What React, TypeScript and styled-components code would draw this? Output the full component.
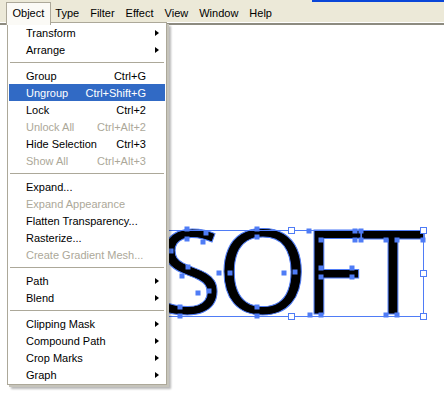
import React from 'react'
import styled, { createGlobalStyle } from 'styled-components'

const Global = createGlobalStyle`
    html, body {
        margin: 0;
        padding: 0;
        background: #fff;
        overflow: hidden;
    }
`

const Root = styled.div`
    position: relative;
    width: 444px;
    height: 401px;
    overflow: hidden;
    background: #fff;
    font-family: "Liberation Sans", Arial, sans-serif;
    font-size: 11px;
    color: #000;
`

const TitleEdge = styled.div`
    height: 2px;
    background: linear-gradient(to right, #ece9d8 0, #ece9d8 312px, #0a46d8 312px, #0a46d8 100%);
`

const MenuBar = styled.div`
    display: flex;
    height: 20px;
    padding-left: 7px;
    background: #ece9d8;
    border-bottom: 1px solid #fff;
    box-shadow: 0 2px 0 #8d8b80;
    margin-bottom: 2px;
`

const BarItem = styled.div<{ $open?: boolean }>`
    display: flex;
    align-items: center;
    padding: 0 5.5px;
    box-sizing: border-box;
    background: ${p => (p.$open ? '#fbfaf6' : 'transparent')};
    border: 1px solid ${p => (p.$open ? '#aca899' : 'transparent')};
    border-bottom: none;
    margin: 0 -1px;
    position: relative;
    z-index: ${p => (p.$open ? 3 : 0)};
    height: ${p => (p.$open ? '23px' : '20px')};
    padding-bottom: ${p => (p.$open ? '3px' : '0')};
`

const Menu = styled.div`
    position: absolute;
    left: 7px;
    top: 22px;
    width: 156px;
    padding: 1px;
    background: #fff;
    border: 1px solid #aca899;
    box-shadow: 2px 2px 0 #c6c4bb, 4px 4px 2px rgba(0, 0, 0, 0.28);
    z-index: 2;
`

const Row = styled.div<{ $active?: boolean; $disabled?: boolean }>`
    display: grid;
    grid-template-columns: 1fr auto 19px;
    align-items: center;
    height: 17px;
    line-height: 16px;
    padding-left: 17px;
    white-space: nowrap;
    background: ${p => (p.$active ? '#316ac5' : 'transparent')};
    color: ${p => (p.$active ? '#fff' : p.$disabled ? '#aca899' : '#000')};
`

const Shortcut = styled.span`
    margin-left: 10px;
    text-align: right;
`

const ArrowCell = styled.span`
    display: flex;
    align-items: center;
    padding-left: 9px;
`

const Arrow = styled.span`
    width: 0;
    height: 0;
    border-top: 3.5px solid transparent;
    border-bottom: 3.5px solid transparent;
    border-left: 4px solid #000;
`

const Separator = styled.div`
    height: 1px;
    margin: 4px 1px 4px 1px;
    background: #aca899;
`

const Artwork = styled.div`
    position: absolute;
    left: 150px;
    top: 205px;
    width: 290px;
    height: 120px;
    z-index: 1;
`

const Letters = styled.div`
    position: absolute;
    left: 8px;
    top: 5px;
    font-family: "Open Sans", sans-serif;
    font-size: 118px;
    line-height: 1;
    letter-spacing: -6px;
    white-space: nowrap;
    color: #000;
    -webkit-text-stroke: 1px #4f7cf6;
`

const Glyph = styled.span<{ $shift?: number }>`
    margin-left: ${p => p.$shift ?? 0}px;
`

const Overlay = styled.svg`
    position: absolute;
    left: 0;
    top: 0;
`

const menuBar = ['Object', 'Type', 'Filter', 'Effect', 'View', 'Window', 'Help']

type Item =
    | { sep: true }
    | { label: string; shortcut?: string; sub?: boolean; disabled?: boolean; active?: boolean }

const items: Item[] = [
    { label: 'Transform', sub: true },
    { label: 'Arrange', sub: true },
    { sep: true },
    { label: 'Group', shortcut: 'Ctrl+G' },
    { label: 'Ungroup', shortcut: 'Ctrl+Shift+G', active: true },
    { label: 'Lock', shortcut: 'Ctrl+2' },
    { label: 'Unlock All', shortcut: 'Ctrl+Alt+2', disabled: true },
    { label: 'Hide Selection', shortcut: 'Ctrl+3' },
    { label: 'Show All', shortcut: 'Ctrl+Alt+3', disabled: true },
    { sep: true },
    { label: 'Expand...' },
    { label: 'Expand Appearance', disabled: true },
    { label: 'Flatten Transparency...' },
    { label: 'Rasterize...' },
    { label: 'Create Gradient Mesh...', disabled: true },
    { sep: true },
    { label: 'Path', sub: true },
    { label: 'Blend', sub: true },
    { sep: true },
    { label: 'Clipping Mask', sub: true },
    { label: 'Compound Path', sub: true },
    { label: 'Crop Marks', sub: true },
    { label: 'Graph', sub: true },
]

// anchor points of the outlined letters, page coordinates
const anchors: [number, number][] = [
    [187, 229], [206, 233], [203, 242], [187, 239], [171, 251], [188, 267], [182, 276],
    [209, 291], [198, 293], [180, 307], [180, 316], [163, 297], [163, 240],
    [257, 229], [257, 237], [219, 273], [230, 273], [284, 273], [295, 272], [257, 307], [257, 316],
    [309, 231], [355, 231], [355, 240], [321, 240], [321, 268], [352, 268], [352, 277],
    [321, 277], [321, 315], [310, 315],
    [361, 231], [423, 231], [423, 240], [397, 240], [397, 315], [386, 315], [386, 240], [361, 240],
]

const handles: [number, number][] = [
    [159, 230], [291, 230], [423, 230], [423, 273], [423, 316], [291, 316], [159, 316], [159, 273],
]

const Selection = () => (
    <Overlay width={290} height={120} viewBox="150 205 290 120">
        <rect x={159.5} y={230.5} width={264} height={86} fill="none" stroke="#4f7cf6" strokeWidth={1} />
        {anchors.map(([x, y], i) => (
            <rect key={i} x={x - 2.5} y={y - 2.5} width={5} height={5} fill="#4f7cf6" />
        ))}
        {handles.map(([x, y], i) => (
            <rect key={'h' + i} x={x - 2.5} y={y - 2.5} width={6} height={6} fill="#fff" stroke="#4f7cf6" strokeWidth={1} />
        ))}
    </Overlay>
)

export default function App() {
    return (
        <Root>
            <Global />
            <TitleEdge />
            <MenuBar>
                {menuBar.map((m, i) => (
                    <BarItem key={m} $open={i === 0}>{m}</BarItem>
                ))}
            </MenuBar>
            <Artwork>
                <Letters>
                    SOF<Glyph $shift={3}>T</Glyph>
                </Letters>
                <Selection />
            </Artwork>
            <Menu>
                {items.map((it, i) =>
                    'sep' in it ? (
                        <Separator key={i} />
                    ) : (
                        <Row key={i} $active={it.active} $disabled={it.disabled}>
                            <span>{it.label}</span>
                            <Shortcut>{it.shortcut}</Shortcut>
                            <ArrowCell>{it.sub && <Arrow />}</ArrowCell>
                        </Row>
                    )
                )}
            </Menu>
        </Root>
    )
}
